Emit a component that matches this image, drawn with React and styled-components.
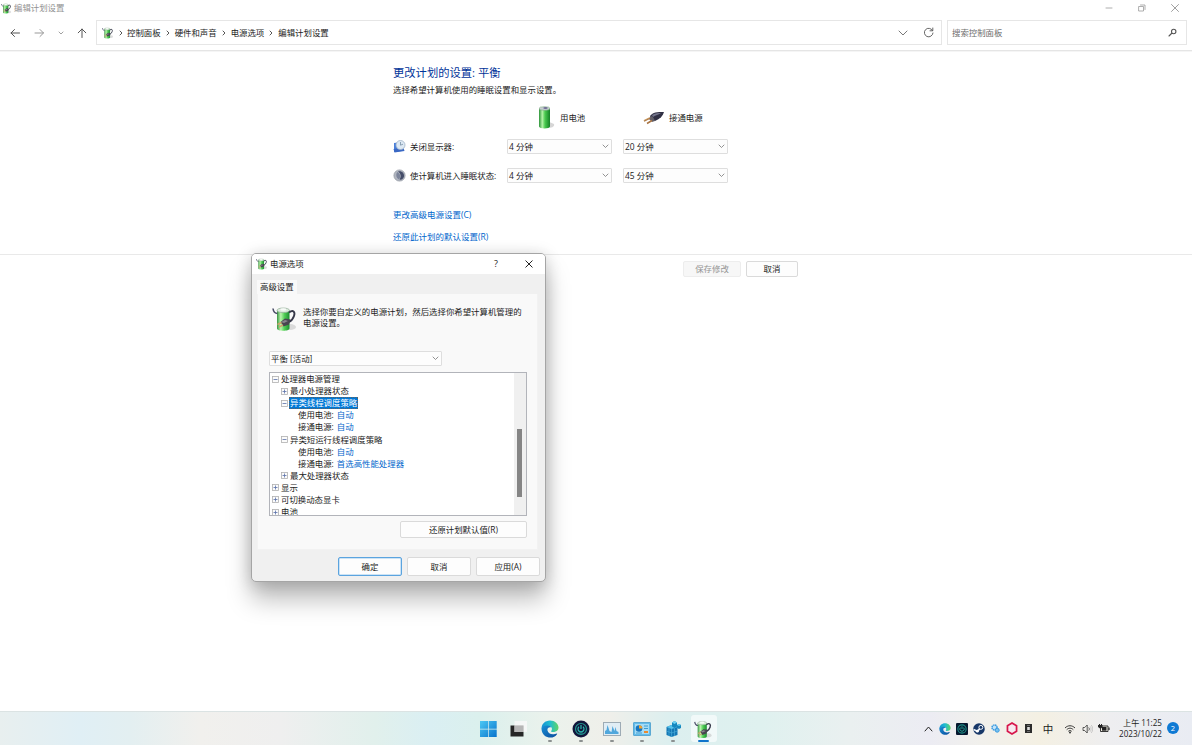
import React from 'react'
import styled, { createGlobalStyle, css } from 'styled-components'

const GlobalStyle = createGlobalStyle`
	* {
		box-sizing: border-box;
	}
	body {
		margin: 0;
		overflow: hidden;
		background: #fff;
		color: #1b1b1b;
		font-family: 'Open Sans', 'Noto Sans CJK SC', sans-serif;
		font-size: 8.42px;
		line-height: 12px;
		white-space: nowrap;
	}
	svg {
		display: block;
		flex: none;
	}
`

const Desktop = styled.div`
	position: relative;
	display: flex;
	flex-direction: column;
	width: 1192px;
	height: 745px;
	overflow: hidden;
`

const TitleBar = styled.header`
	display: flex;
	align-items: center;
	height: 16px;
	padding: 0 12px 0 1px;
	gap: 2px;
	color: #929292;
`

const WindowButtons = styled.div`
	display: flex;
	gap: 23px;
	margin-left: auto;
`

const NavBar = styled.nav`
	display: flex;
	align-items: center;
	height: 35px;
	padding: 0 5px 1px 10px;
	border-bottom: 1px solid #e5e5e5;
	box-shadow: 0 1px 0 #f5f5f5;
`

const NavButtons = styled.div`
	display: flex;
	align-items: center;
	justify-content: space-between;
	width: 77px;
	margin-right: 9px;
`

const Field = styled.div`
	display: flex;
	align-items: center;
	height: 25px;
	border: 1px solid #e6e6e6;
`

const AddressBar = styled(Field)`
	width: 846px;
	padding: 0 7px 0 5px;
`

const Crumb = styled.span`
	display: flex;
	align-items: center;
	svg {
		margin: 0 5px;
	}
	&:first-of-type svg {
		margin-right: 4px;
	}
`

const AddressTools = styled.div`
	display: flex;
	align-items: center;
	gap: 15px;
	margin-left: auto;
`

const SearchBox = styled(Field)`
	justify-content: space-between;
	width: 240px;
	margin-left: 5px;
	padding: 0 9px 0 4px;
	color: #6d6d6d;
`

const Content = styled.main`
	height: 204px;
	padding: 13px 0 0 393px;
	border-bottom: 1px solid #e9e9e9;
`

const Heading = styled.h1`
	margin: 0;
	color: #003399;
	font-size: 11.3px;
	font-weight: 400;
	line-height: 17px;
`

const Intro = styled.p`
	margin: 3px 0 0;
`

const Settings = styled.div`
	display: grid;
	grid-template-columns: 103px 105px 105px;
	grid-template-rows: 15px 15px 15px;
	column-gap: 11px;
	row-gap: 14px;
	align-items: center;
	margin-top: 14px;
`

const ColumnHead = styled.div`
	display: flex;
	align-items: center;
	gap: ${p => p.$gap}px;
	padding-left: ${p => p.$indent}px;
`

const RowLabel = styled.div`
	display: flex;
	align-items: center;
	gap: 4px;
`

const SelectBox = styled.div`
	display: flex;
	align-items: center;
	justify-content: space-between;
	height: 15px;
	padding: 0 2px 0 1px;
	background: #fdfdfd;
	border: 1px solid #dedede;
	border-radius: 1px;
`

const PlanSelect = styled(SelectBox)`
	width: 173px;
	margin: 18px 0 6px;
`

const Links = styled.div`
	display: flex;
	flex-direction: column;
	gap: 10px;
	margin-top: 26px;
	font-size: 8.5px;
`

const Link = styled.a`
	color: #0066cc;
`

const Footer = styled.footer`
	display: flex;
	flex: 1;
	gap: 5px;
	align-items: flex-start;
	padding: 6px 0 0 683px;
`

const Button = styled.button`
	display: flex;
	align-items: center;
	justify-content: center;
	width: ${p => p.$width}px;
	height: ${p => p.$height || 16}px;
	padding: 0;
	font: inherit;
	color: #1b1b1b;
	background: #fdfdfd;
	border: 1px solid #dadada;
	border-radius: 2px;
	${p =>
		p.$primary &&
		css`
			border-color: #5ba4df;
			box-shadow: inset 0 0 0 0.5px #9bc9ee;
		`}
	&:disabled {
		color: #949494;
		background: #f7f7f7;
		border-color: #ededed;
	}
`

// floats over the control panel window
const Dialog = styled.section`
	position: absolute;
	left: 251px;
	top: 253px;
	display: flex;
	flex-direction: column;
	width: 295px;
	height: 329px;
	background: #f0f0f0;
	border: 1px solid #a5a5a5;
	border-radius: 5px;
	box-shadow: 0 18px 24px rgba(0, 0, 0, 0.25), 0 2px 16px rgba(0, 0, 0, 0.18);
`

const DialogTitle = styled.div`
	display: flex;
	align-items: center;
	height: 20px;
	padding: 0 12px 1px 4px;
	gap: 2px;
	background: #fff;
	border-radius: 4px 4px 0 0;
`

const HelpMark = styled.span`
	margin: 0 25px 0 auto;
	font-size: 9px;
`

const Tab = styled.div`
	width: 40px;
	height: 14px;
	margin: 6px 0 0 5px;
	padding: 0 0 0 3px;
	line-height: 13px;
	background: #f9f9f9;
`

const TabPanel = styled.div`
	height: 256px;
	margin: 0 7px 0 5px;
	padding: 11px 11px 0;
	background: #f9f9f9;
	border: 1px solid #f2f2f2;
	border-top: 0;
`

const PlanInfo = styled.div`
	display: flex;
	align-items: center;
	height: 28px;
	padding-left: 3px;
	gap: 5px;
	p {
		align-self: flex-start;
		margin: 1px 0 0;
		line-height: 11px;
	}
`

const TreeBox = styled.div`
	display: flex;
	width: 258px;
	height: 144px;
	background: #fff;
	border: 1px solid #b2b4ba;
	overflow: hidden;
`

const TreeRows = styled.div`
	flex: 1;
	padding-left: 2px;
	overflow: hidden;
`

const TreeRow = styled.div`
	display: flex;
	align-items: center;
	height: 12.1px;
	padding-left: ${p => [0, 9, 25][p.$level]}px;
	gap: 1px;
`

const TreeLabel = styled.span`
	height: 12px;
	padding: 0 1px;
	line-height: 12px;
	${p =>
		p.$selected &&
		css`
			color: #fff;
			background: #0078d7;
			outline: 1px dotted #62625f;
			outline-offset: -1px;
		`}
`

const TreeValue = styled(TreeLabel)`
	color: #0066cc;
`

const ScrollTrack = styled.div`
	width: 12px;
	padding: 56px 0 0 3px;
	background: #f0f0f0;
`

const ScrollThumb = styled.div`
	width: 5px;
	height: 68px;
	background: #858585;
`

const RestoreRow = styled.div`
	display: flex;
	justify-content: flex-end;
	margin: 5px -1px 0 0;
`

const DialogButtons = styled.div`
	display: flex;
	justify-content: flex-end;
	gap: 5px;
	padding: 7px 5px 0 0;
`

const Taskbar = styled.div`
	display: flex;
	align-items: center;
	height: 34px;
	border-top: 1px solid #dbe3e3;
	background: linear-gradient(
		90deg,
		#e8efef 0,
		#e0eff5 80px,
		#e3eff1 130px,
		#f1f0ed 200px,
		#efefef 280px,
		#e1f0ec 375px,
		#daeff3 430px,
		#dbf0ed 480px,
		#ebf2ec 550px,
		#efefea 610px,
		#dcefef 670px,
		#dff1ef 760px,
		#eaf0f0 850px,
		#ececf3 930px,
		#f1f0ec 980px,
		#f4f0e3 1040px,
		#eeeef0 1110px,
		#e9ecf3 1192px
	);
`

const TaskItems = styled.div`
	display: flex;
	align-items: center;
	padding-left: 473px;
`

const TaskItem = styled.div`
	display: flex;
	flex-direction: column;
	align-items: center;
	justify-content: flex-end;
	gap: 1px;
	width: 26px;
	height: 27px;
	margin: 0 2.4px;
	border-radius: 3px;
	background: ${p => (p.$active ? 'rgba(255, 255, 255, 0.6)' : 'transparent')};
	&::after {
		content: '';
		width: ${p => (p.$active ? 11 : 4)}px;
		height: 2px;
		border-radius: 1px;
		background: ${p =>
			p.$active ? '#0f74cb' : p.$running ? '#8c9191' : 'transparent'};
	}
`

const Tray = styled.div`
	display: flex;
	align-items: center;
	margin-left: auto;
	padding-right: 13px;
	color: #1b1b1b;
`

const TraySlot = styled.div`
	display: flex;
	justify-content: center;
	width: ${p => p.$width || 16.7}px;
	font-size: 10.5px;
`

const Clock = styled.div`
	width: 47px;
	margin: -1px 5px 0 0;
	display: flex;
	flex-direction: column;
	align-items: flex-end;
	font-size: 8.1px;
	line-height: 11px;
`

const Badge = styled.div`
	width: 12px;
	height: 12px;
	margin-top: -1px;
	border-radius: 50%;
	color: #fff;
	background: #0f7ad4;
	font-size: 7.5px;
	line-height: 12px;
	text-align: center;
`

const PowerIcon = ({ size = 26 }) => (
	<svg width={size} height={size} viewBox="0 0 26 26">
		<defs>
			<linearGradient id="cell">
				<stop offset="0" stopColor="#36963f" />
				<stop offset="0.3" stopColor="#b9f5ac" />
				<stop offset="0.6" stopColor="#4fce54" />
				<stop offset="1" stopColor="#1d8b30" />
			</linearGradient>
		</defs>
		<ellipse cx="18" cy="21" rx="6" ry="3" fill="#bbb" opacity="0.5" />
		<path d="M5 4v18.500c0 3 12.500 3 12.500 0V4z" fill="url(#cell)" />
		<ellipse cx="11.250" cy="4.300" rx="6.250" ry="2.300" fill="#dcebdd" stroke="#91ab95" strokeWidth="0.700" />
		<ellipse cx="11.250" cy="3.500" rx="3" ry="1.300" fill="#f7faf7" />
		<path d="M1 2.500C1.500 6 3 7.500 5.500 7.500" stroke="#4b4e68" strokeWidth="1.600" fill="none" />
		<path d="M17 6.500c4-3 6.500-1 5 3.500-1 3-3 5-5 6" stroke="#363849" strokeWidth="1.900" fill="none" />
		<path d="M8.500 16l4.500-3.500 5.500 1-1.500 5-5.500 2z" fill="#484550" />
		<path d="M9 16l4-2 3 1-4 2z" fill="#88838c" />
		<path d="M9.500 16.500l-4 2M11 19l-4 2" stroke="#d0a06a" strokeWidth="1.400" />
	</svg>
)

const BatteryIcon = () => (
	<svg width="17" height="24" viewBox="0 0 17 24">
		<defs>
			<linearGradient id="tube">
				<stop offset="0" stopColor="#2b9338" />
				<stop offset="0.3" stopColor="#b4f3a7" />
				<stop offset="0.55" stopColor="#48c94e" />
				<stop offset="1" stopColor="#148126" />
			</linearGradient>
		</defs>
		<path d="M9 15l7 3c1 3-3 4-7 4z" fill="#ccc" opacity="0.8" />
		<path d="M1 2.500v18c0 2.500 11 2.500 11 0v-18z" fill="url(#tube)" />
		<ellipse cx="6.500" cy="2.500" rx="5.500" ry="1.800" fill="#c8cdd3" stroke="#78a77d" strokeWidth="0.600" />
		<ellipse cx="7.500" cy="2" rx="2.200" ry="1" fill="#706f96" />
	</svg>
)

const PlugIcon = () => (
	<svg width="22" height="14" viewBox="0 0 22 14">
		<path d="M7 5c3-4 7-4 14-4-1 4-4 7-9 9l-4-1z" fill="#303044" />
		<path d="M9 4c4-2 6-2 9-2-3 2-5 2-8 4z" fill="#74758c" />
		<path d="M8 5L6 8l3 3 3-1-2-4z" fill="#625f68" />
		<path d="M7 7L1 10M9 9.500L4 12.500" stroke="#a97442" strokeWidth="1.500" />
		<path d="M6 7L1 9.500" stroke="#ddb577" strokeWidth="0.600" />
	</svg>
)

const DisplayClockIcon = () => (
	<svg width="13" height="13" viewBox="0 0 13 13">
		<path d="M1 3l8-1v9l-8 1z" fill="#4a7fda" />
		<path d="M0.500 9l10-1 1 3-10 1.500z" fill="#3a68c4" />
		<circle cx="7.500" cy="5" r="4.500" fill="#dde9f4" stroke="#a2b4c6" strokeWidth="0.800" />
		<path d="M7.500 2v3.200l2.500-1" stroke="#7991a7" strokeWidth="0.800" fill="none" />
	</svg>
)

const MoonIcon = () => (
	<svg width="13" height="13" viewBox="0 0 13 13">
		<circle cx="6.500" cy="6.500" r="5.600" fill="#b1b6c0" stroke="#9196a1" strokeWidth="0.700" />
		<path d="M5 2.500c4-1 6.500 2 6 5-.5 2.500-2.500 3.500-4.500 3 2-2.500 1.500-6-1.500-8z" fill="#454d69" />
		<path d="M4.500 3c3 2 3.500 5 1.500 7.500C3 9 2.500 5 4.500 3z" fill="#7d859b" />
	</svg>
)

const Glyph = ({ d, w = 10, h = w, stroke = '#555', width = 1 }) => (
	<svg width={w} height={h} viewBox={`0 0 ${w} ${h}`}>
		<path
			d={d}
			fill="none"
			stroke={stroke}
			strokeWidth={width}
			strokeLinecap="round"
			strokeLinejoin="round"
		/>
	</svg>
)

const Chevron = () => <Glyph w={7} h={5} d="M1 1l2.500 2.500L6 1" stroke="#777" width={0.8} />

const Expander = ({ open }) => (
	<svg width="7" height="7" viewBox="0 0 7 7">
		<rect x="0.500" y="0.500" width="6" height="6" fill="#fbfbfb" stroke="#b0b0b0" strokeWidth="0.800" />
		<path d={open ? 'M1.500 3.500h4' : 'M1.500 3.500h4M3.500 1.500v4'} stroke="#5b71a9" strokeWidth="0.800" />
	</svg>
)

const WindowsLogo = () => (
	<svg width="18" height="18" viewBox="0 0 18 18">
		<defs>
			<linearGradient id="win" x2="1" y2="1">
				<stop stopColor="#4cc8f4" />
				<stop offset="1" stopColor="#0873cc" />
			</linearGradient>
		</defs>
		<path d="M1 1h8v7.700H1zM9.700 1h8v7.700h-8zM1 9.400h8V17H1zM9.700 9.400h8V17h-8z" fill="url(#win)" />
	</svg>
)

const TaskViewIcon = () => (
	<svg width="18" height="18" viewBox="0 0 18 18">
		<path d="M0.500 5.500h13v11h-13z" fill="#262626" />
		<path d="M4.500 1H17v11H4.500z" fill="#f8f8f8" opacity="0.85" />
		<path d="M4.500 5.500h9V12h-9z" fill="#b6b6b6" />
	</svg>
)

const EdgeIcon = ({ size = 18 }) => (
	<svg width={size} height={size} viewBox="0 0 18 18">
		<defs>
			<linearGradient id="edgeTop">
				<stop stopColor="#1590d4" />
				<stop offset="0.5" stopColor="#20bdd0" />
				<stop offset="1" stopColor="#62d565" />
			</linearGradient>
			<linearGradient id="edgeLow" y2="1" x2="1">
				<stop stopColor="#198fd5" />
				<stop offset="1" stopColor="#0b4c9c" />
			</linearGradient>
		</defs>
		<path d="M0.500 9C0.500 4 4 0.500 9 0.500s8.500 3.500 8.500 7c0 3-2.500 4.500-5.500 4.500-1.500 0-2.500-.5-1.500-1.500 1-1.500.5-4.500-3-4.500-4 0-6 2-7 3z" fill="url(#edgeTop)" />
		<path d="M0.500 9C1 6.500 3.500 5.500 6.500 5.500c2 0 3.500.8 4 2-3-.8-4.500 1-4 3 .5 3 4 4.500 7.500 3.500 1.500-.5 2.500-.8 2 .2C12.500 20 1 18.500.5 9z" fill="url(#edgeLow)" />
	</svg>
)

const RingIcon = () => (
	<svg width="18" height="18" viewBox="0 0 18 18">
		<circle cx="9" cy="9" r="8.500" fill="#11163b" />
		<circle cx="9" cy="9" r="5.500" fill="none" stroke="#21948f" strokeWidth="1.200" />
		<path d="M7 6.700a3 3 0 1 0 4 0M9 5v4" fill="none" stroke="#2bb8b0" strokeWidth="1.200" />
		<path d="M7.300 13h3.400" stroke="#2bb8b0" strokeWidth="0.800" />
	</svg>
)

const MonitorIcon = () => (
	<svg width="18" height="14" viewBox="0 0 18 14">
		<rect x="0.500" y="0.500" width="17" height="13" fill="#e0edf5" stroke="#9dabb5" />
		<path d="M2 12V9l1.500-1 1-5 2 6 2 1 1-6 2 5 1-4 1 4 2 1v2z" fill="#50a7dc" />
	</svg>
)

const ControlPanelIcon = () => (
	<svg width="18" height="14" viewBox="0 0 18 14">
		<rect x="0.500" y="0.500" width="17" height="13" rx="0.500" fill="#62bceb" stroke="#5ba9d3" />
		<path d="M2 2h14v10H2z" fill="#a5dcf5" />
		<circle cx="6" cy="6.500" r="3.300" fill="#1776bf" />
		<path d="M6 6.500V3.200a3.300 3.300 0 0 1 3.300 3.300z" fill="#f4a22e" />
		<path d="M11 4h4M11 6.500h4M3 11h6" stroke="#3f9cd0" strokeWidth="1" />
		<path d="M11 9h4v2h-4z" fill="#e98a2f" />
	</svg>
)

const RegistryIcon = () => (
	<svg width="18" height="18" viewBox="0 0 18 18">
		<path d="M2.500 7l5-2 6 2v8l-6 2-5-2z" fill="#1478b5" />
		<path d="M2.500 7l5-2 6 2-6 2z" fill="#56c2eb" />
		<path d="M7.500 9v8M5 8v8M10.500 8v8M2.500 11l5 2 6-2" stroke="#4fb2dd" strokeWidth="0.600" fill="none" />
		<path d="M8 2.500L10.500 1 13 2.500v4L10.500 8 8 6.500zM13 5l2-1 2 1v3l-2 1-2-1z" fill="#1688bf" />
		<path d="M8 2.500L10.500 1 13 2.500 10.500 4zM13 5l2-1 2 1-2 1z" fill="#6dd1f2" />
	</svg>
)

const TASKS = [
	{ icon: <WindowsLogo /> },
	{ icon: <TaskViewIcon /> },
	{ icon: <EdgeIcon />, running: true },
	{ icon: <RingIcon />, running: true },
	{ icon: <MonitorIcon />, running: true },
	{ icon: <ControlPanelIcon />, running: true },
	{ icon: <RegistryIcon />, running: true },
	{ icon: <PowerIcon size={19} />, running: true, active: true }
]

const TaskIcon = styled.div`
	display: flex;
	align-items: center;
	justify-content: center;
	height: 20px;
`

const TRAY = [
	<Glyph w={9} h={6} d="M1 5l3.500-4L8 5" stroke="#222" />,
	<EdgeIcon size={12} />,
	<svg width="12" height="12" viewBox="0 0 11 11">
		<rect width="11" height="11" rx="1" fill="#07182f" />
		<circle cx="5.500" cy="5.500" r="3.800" fill="none" stroke="#1c8b85" />
		<path d="M4 4.200a2 2 0 1 0 3 0M5.500 3v2.500" fill="none" stroke="#2bb5a3" strokeWidth="0.800" />
	</svg>,
	<svg width="12" height="12" viewBox="0 0 11 11">
		<circle cx="5.500" cy="5.500" r="5.300" fill="#173768" />
		<path d="M0.500 6l3.500 1.500L7 4.500" fill="none" stroke="#eef3f8" strokeWidth="1.500" />
		<circle cx="7.200" cy="4" r="1.800" fill="#173768" stroke="#fff" strokeWidth="0.900" />
		<circle cx="4" cy="7.500" r="1.300" fill="#fff" />
	</svg>,
	<svg width="9" height="9" viewBox="0 0 9 9">
		<circle cx="3.500" cy="3.500" r="2.500" fill="#c4e4f9" stroke="#3c9be0" strokeWidth="1.500" strokeDasharray="1.500 0.500" />
		<circle cx="6.200" cy="6.200" r="2" fill="#77c1ef" stroke="#3c9be0" strokeWidth="1" />
	</svg>,
	<svg width="12" height="13" viewBox="0 0 11 12">
		<path d="M5.500 1l4.200 2.500v5L5.500 11 1.300 8.500v-5z" fill="#f7e9ef" stroke="#d7174c" strokeWidth="1.600" />
	</svg>,
	<svg width="7" height="9" viewBox="0 0 7 9">
		<path d="M0 0h7v9H0z" fill="#2c2c2c" />
		<path d="M2 1.500h3M2 7.500h3" stroke="#888" strokeWidth="0.700" />
		<path d="M2.200 3h2.600v3H2.200z" fill="#ddd" />
	</svg>
]

const TREE = [
	{ level: 0, open: true, label: '处理器电源管理' },
	{ level: 1, label: '最小处理器状态' },
	{ level: 1, open: true, label: '异类线程调度策略', selected: true },
	{ level: 2, label: '使用电池:', value: '自动' },
	{ level: 2, label: '接通电源:', value: '自动' },
	{ level: 1, open: true, label: '异类短运行线程调度策略' },
	{ level: 2, label: '使用电池:', value: '自动' },
	{ level: 2, label: '接通电源:', value: '首选高性能处理器' },
	{ level: 1, label: '最大处理器状态' },
	{ level: 0, label: '显示' },
	{ level: 0, label: '可切换动态显卡' },
	{ level: 0, label: '电池' }
]

const Select = ({ children, as: Box = SelectBox }) => (
	<Box>
		<span>{children}</span>
		<Chevron />
	</Box>
)

const PowerDialog = () => (
	<Dialog>
		<DialogTitle>
			<PowerIcon size={12} />
			电源选项
			<HelpMark>?</HelpMark>
			<Glyph w={8} d="M.8.8l6.400 6.400M7.200.8L.8 7.200" stroke="#222" />
		</DialogTitle>
		<Tab>高级设置</Tab>
		<TabPanel>
			<PlanInfo>
				<PowerIcon />
				<p>
					选择你要自定义的电源计划，然后选择你希望计算机管理的
					<br />
					电源设置。
				</p>
			</PlanInfo>
			<Select as={PlanSelect}>平衡 [活动]</Select>
			<TreeBox>
				<TreeRows>
					{TREE.map((row, i) => (
						<TreeRow key={i} $level={row.level}>
							{row.level < 2 && <Expander open={row.open} />}
							<TreeLabel $selected={row.selected}>{row.label}</TreeLabel>
							{row.value && <TreeValue>{row.value}</TreeValue>}
						</TreeRow>
					))}
				</TreeRows>
				<ScrollTrack>
					<ScrollThumb />
				</ScrollTrack>
			</TreeBox>
			<RestoreRow>
				<Button $width={127} $height={17}>还原计划默认值(R)</Button>
			</RestoreRow>
		</TabPanel>
		<DialogButtons>
			<Button $width={64} $height={19} $primary>确定</Button>
			<Button $width={64} $height={19}>取消</Button>
			<Button $width={64} $height={19}>应用(A)</Button>
		</DialogButtons>
	</Dialog>
)

const App = () => (
	<Desktop>
		<GlobalStyle />
		<TitleBar>
			<PowerIcon size={11} />
			编辑计划设置
			<WindowButtons>
				<Glyph d="M2 5h6" stroke="#999" width={0.8} />
				<Glyph d="M2 3.500h4.500V8H2zM3.500 2H8v4.500" stroke="#999" width={0.8} />
				<Glyph d="M1.500 1.500l7 7M8.500 1.500l-7 7" stroke="#888" width={0.8} />
			</WindowButtons>
		</TitleBar>
		<NavBar>
			<NavButtons>
				<Glyph d="M9.500 5H1M4.500 1.500L1 5l3.500 3.500" w={11} h={10} />
				<Glyph d="M1 5h8.500M6 1.500L9.500 5 6 8.500" w={11} h={10} stroke="#999" />
				<Glyph d="M1 1l2 2 2-2" w={6} h={4} stroke="#888" width={0.8} />
				<Glyph d="M5 9.500V1M1.200 4.800L5 1l3.800 3.800" w={10} h={10} />
			</NavButtons>
			<AddressBar>
				<PowerIcon size={12} />
				{['控制面板', '硬件和声音', '电源选项', '编辑计划设置'].map(name => (
					<Crumb key={name}>
						<Glyph w={4} h={6} d="M1 1l2 2-2 2" stroke="#444" width={0.9} />
						{name}
					</Crumb>
				))}
				<AddressTools>
					<Glyph w={10} h={6} d="M1 1l4 4 4-4" width={0.8} />
					<Glyph w={11} d="M9.500 3.500A4.300 4.300 0 1 0 10 6M9.800 1v2.800H7" width={0.9} />
				</AddressTools>
			</AddressBar>
			<SearchBox>
				搜索控制面板
				<Glyph w={9} d="M3.500 3.500a2.200 2.200 0 1 0 4.400 0a2.200 2.200 0 1 0-4.400 0M4 5L1 8" width={1.1} />
			</SearchBox>
		</NavBar>
		<Content>
			<Heading>更改计划的设置: 平衡</Heading>
			<Intro>选择希望计算机使用的睡眠设置和显示设置。</Intro>
			<Settings>
				<div />
				<ColumnHead $indent={31} $gap={5}>
					<BatteryIcon />
					用电池
				</ColumnHead>
				<ColumnHead $indent={20} $gap={4}>
					<PlugIcon />
					接通电源
				</ColumnHead>
				<RowLabel>
					<DisplayClockIcon />
					关闭显示器:
				</RowLabel>
				<Select>4 分钟</Select>
				<Select>20 分钟</Select>
				<RowLabel>
					<MoonIcon />
					使计算机进入睡眠状态:
				</RowLabel>
				<Select>4 分钟</Select>
				<Select>45 分钟</Select>
			</Settings>
			<Links>
				<Link>更改高级电源设置(C)</Link>
				<Link>还原此计划的默认设置(R)</Link>
			</Links>
		</Content>
		<Footer>
			<Button $width={58} disabled>保存修改</Button>
			<Button $width={52}>取消</Button>
		</Footer>
		<PowerDialog />
		<Taskbar>
			<TaskItems>
				{TASKS.map((task, i) => (
					<TaskItem key={i} $running={task.running} $active={task.active}>
						<TaskIcon>{task.icon}</TaskIcon>
					</TaskItem>
				))}
			</TaskItems>
			<Tray>
				{TRAY.map((icon, i) => (
					<TraySlot key={i}>{icon}</TraySlot>
				))}
				<TraySlot $width={22}>中</TraySlot>
				<TraySlot $width={22}>
					<svg width="12" height="10" viewBox="0 0 12 10">
						<path d="M1 4c3-3 7-3 10 0M2.700 5.700c2-2 4.600-2 6.600 0M4.300 7.300c1-1 2.400-1 3.400 0" fill="none" stroke="#222" strokeWidth="0.900" />
						<circle cx="6" cy="8.500" r="0.900" fill="#222" />
					</svg>
				</TraySlot>
				<TraySlot $width={12}>
					<svg width="11" height="10" viewBox="0 0 11 10">
						<path d="M1 3.500h1.700L5.200 1v8L2.700 6.500H1zM6.700 3.500c.8 1 .8 2 0 3" fill="none" stroke="#333" strokeWidth="0.800" />
						<path d="M8 2.300c1.500 1.700 1.500 3.700 0 5.400M9.200 1c2 2.500 2 5.500 0 8" fill="none" stroke="#b9b9b9" strokeWidth="0.700" />
					</svg>
				</TraySlot>
				<TraySlot $width={22}>
					<svg width="12" height="9" viewBox="0 0 12 9">
						<path d="M2.500 2h7.500v5.500H2.500z" fill="#f5f2e8" stroke="#222" strokeWidth="0.900" />
						<path d="M4 3h4.500v3.700H4z" fill="#222" />
						<path d="M11 3.500V6" stroke="#222" strokeWidth="1.200" />
						<path d="M0 1h1V0h1v1h1V0h1v1h.5v2L3 4.500H2L0 3z" fill="#222" />
					</svg>
				</TraySlot>
				<Clock>
					<span>上午 11:25</span>
					<span>2023/10/22</span>
				</Clock>
				<Badge>2</Badge>
			</Tray>
		</Taskbar>
	</Desktop>
)

export default App
